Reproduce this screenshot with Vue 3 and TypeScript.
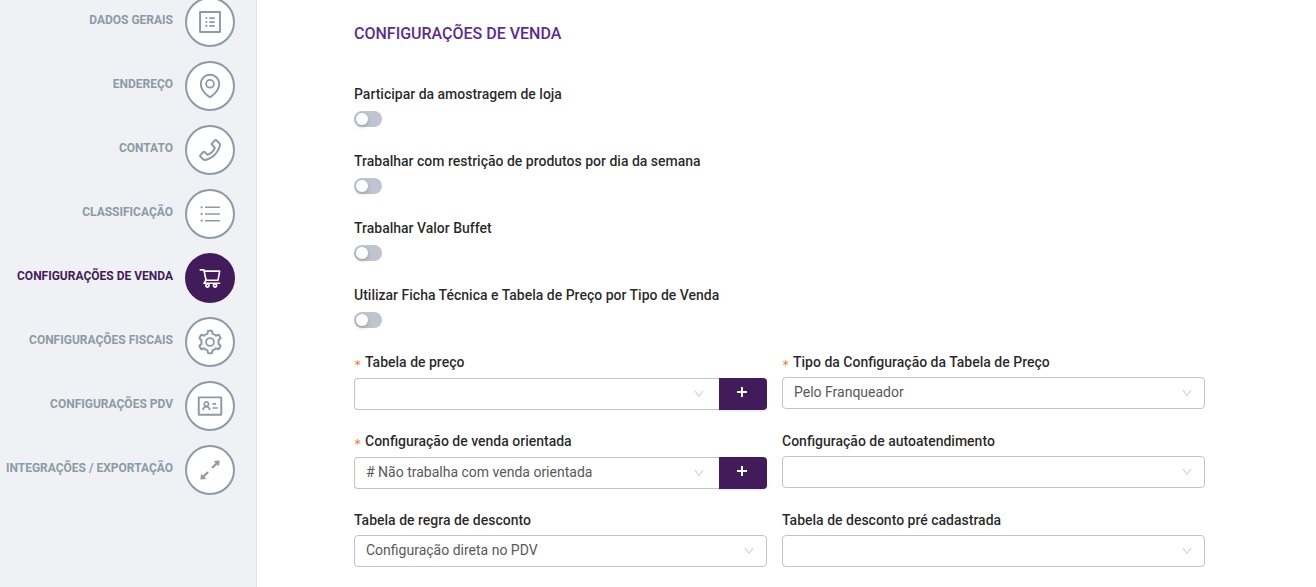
<script setup lang="ts">
import { reactive, ref } from 'vue'

interface Step {
  id: string
  label: string
  icon: string
}

interface Toggle {
  id: string
  label: string
  on: boolean
}

interface Field {
  id: string
  label: string
  required: boolean
  addable: boolean
  value: string
}

// Icon outlines are drawn on a 1024-unit grid.
const steps: Step[] = [
  {
    id: 'dados-gerais',
    label: 'DADOS GERAIS',
    icon: 'M880 112H144c-17.700 0-32 14.300-32 32v736c0 17.700 14.300 32 32 32h736c17.700 0 32-14.300 32-32V144c0-17.700-14.300-32-32-32zm-40 728H184V184h656v656zM484 336h200v64H484zM484 480h200v64H484zM484 624h200v64H484zM340 368a40 40 0 1 0 80 0 40 40 0 1 0-80 0zM340 512a40 40 0 1 0 80 0 40 40 0 1 0-80 0zM340 656a40 40 0 1 0 80 0 40 40 0 1 0-80 0z',
  },
  {
    id: 'endereco',
    label: 'ENDEREÇO',
    icon: 'M854.6 289.1a362.49 362.49 0 0 0-79.9-115.7 370.83 370.83 0 0 0-118.2-77.8C610.7 76.6 562.1 67 512 67c-50.1 0-98.7 9.6-144.5 28.5-44.3 18.3-84 44.500-118.2 77.8A363.6 363.6 0 0 0 169.4 289c-19.5 45-29.4 92.8-29.4 142 0 70.6 16.9 140.9 50.1 208.7 26.7 54.5 64 107.6 111 158.1 80.3 86.2 164.5 138.9 188.4 153a43.9 43.9 0 0 0 22.4 6.1c7.8 0 15.5-2 22.4-6.1 23.9-14.1 108.1-66.8 188.4-153 47-50.4 84.3-103.6 111-158.1C867.1 572 884 501.8 884 431.1c0-49.2-9.9-97-29.4-142zM512 880.2c-65.9-41.900-300-207.8-300-449.1 0-77.9 31.1-151.1 87.6-206.3C356.3 169.5 431.7 139 512 139s155.700 30.5 212.4 85.9C780.9 280 812 353.200 812 431.1c0 241.3-234.1 407.200-300 449.1zM512 255a176 176 0 1 0 0 352 176 176 0 1 0 0-352zm0 66a110 110 0 1 1 0 220 110 110 0 1 1 0-220z',
  },
  {
    id: 'contato',
    label: 'CONTATO',
    icon: 'M877.1 238.7L770.6 132.3c-13-13-30.4-20.3-48.8-20.3s-35.8 7.2-48.8 20.3L558.3 246.8c-13 13-20.3 30.5-20.3 48.9 0 18.5 7.2 35.8 20.3 48.9l89.6 89.7a405.46 405.46 0 0 1-86.4 127.3c-36.7 36.9-79.6 66-127.2 86.6l-89.6-89.7c-13-13-30.4-20.3-48.8-20.3a68.2 68.2 0 0 0-48.8 20.3L132.3 673c-13 13-20.3 30.5-20.3 48.9 0 18.5 7.2 35.8 20.3 48.9l106.4 106.4c22.2 22.2 52.8 34.9 84.2 34.9 6.5 0 12.8-.5 19.2-1.6 132.4-21.8 263.8-92.3 369.9-198.3C818 606 888.4 474.6 910.4 342.1c6.3-37.6-6.3-76.3-33.3-103.4zm-37.6 91.5c-19.5 117.9-82.9 235.5-178.4 331s-213 158.9-330.9 178.4c-14.8 2.5-30-2.5-40.8-13.2L184.9 721.9 295.7 611l119.8 120 .9.9 21.6-8a481.29 481.29 0 0 0 285.7-285.8l8-21.6-120.8-120.7 110.8-110.9 104.5 104.5c10.8 10.8 15.8 26 13.3 40.8z',
  },
  {
    id: 'classificacao',
    label: 'CLASSIFICAÇÃO',
    icon: 'M328 240h544v56H328zM328 484h544v56H328zM328 728h544v56H328zM164 268a42 42 0 1 0 84 0 42 42 0 1 0-84 0zM164 512a42 42 0 1 0 84 0 42 42 0 1 0-84 0zM164 756a42 42 0 1 0 84 0 42 42 0 1 0-84 0z',
  },
  {
    id: 'configuracoes-venda',
    label: 'CONFIGURAÇÕES DE VENDA',
    icon: 'M922.9 701.9H327.4l29.9-60.9 496.8-.9c16.8 0 31.2-12 34.2-28.6l68.8-385.1c1.8-10.1-.9-20.5-7.5-28.4a34.99 34.99 0 0 0-26.6-12.5l-632-2.1-5.4-25.4c-3.4-16.2-18-28-34.6-28H96.5a35.3 35.3 0 1 0 0 70.6h125.9L246 312.8l58.1 281.3-74.8 122.1a34.96 34.96 0 0 0-3 36.8c6 11.9 18.1 19.4 31.5 19.4h62.8a102.43 102.43 0 0 0-20.6 61.7c0 56.6 46 102.6 102.6 102.6s102.6-46 102.6-102.6c0-22.3-7.4-44-20.6-61.7h161.1a102.43 102.43 0 0 0-20.6 61.7c0 56.6 46 102.6 102.6 102.6s102.6-46 102.6-102.6c0-22.3-7.4-44-20.6-61.7H923c19.4 0 35.3-15.8 35.3-35.3a35.42 35.42 0 0 0-35.4-35.2zM305.7 253l575.8 1.9-56.4 315.8-452.3.8L305.7 253zm96.9 612.7c-17.4 0-31.6-14.2-31.6-31.6 0-17.4 14.2-31.6 31.6-31.6s31.6 14.2 31.6 31.6a31.6 31.6 0 0 1-31.6 31.6zm325.1 0c-17.4 0-31.6-14.2-31.6-31.6 0-17.4 14.2-31.6 31.6-31.6s31.6 14.2 31.6 31.6a31.6 31.6 0 0 1-31.6 31.6z',
  },
  {
    id: 'configuracoes-fiscais',
    label: 'CONFIGURAÇÕES FISCAIS',
    icon: 'M924.8 625.7l-65.5-56c3.1-19 4.7-38.4 4.7-57.8s-1.6-38.8-4.7-57.8l65.5-56a32.03 32.03 0 0 0 9.3-35.2l-.9-2.6a443.74 443.74 0 0 0-79.7-137.9l-1.8-2.1a32.12 32.12 0 0 0-35.1-9.5l-81.3 28.9c-30-24.6-63.5-44-99.7-57.6l-15.7-85a32.05 32.05 0 0 0-25.8-25.7l-2.7-.5c-52.1-9.4-106.9-9.4-159 0l-2.7.5a32.05 32.05 0 0 0-25.8 25.7l-15.8 85.4a351.86 351.86 0 0 0-99 57.4l-81.9-29.1a32 32 0 0 0-35.1 9.5l-1.8 2.1a446.02 446.02 0 0 0-79.7 137.9l-.9 2.6c-4.5 12.5-.8 26.5 9.3 35.2l66.3 56.6c-3.1 18.8-4.6 38-4.6 57.1 0 19.2 1.5 38.4 4.6 57.1L99 625.5a32.03 32.03 0 0 0-9.3 35.2l.9 2.6c18.1 50.4 44.9 96.9 79.7 137.9l1.8 2.1a32.12 32.12 0 0 0 35.1 9.5l81.9-29.1c29.8 24.5 63.1 43.9 99 57.4l15.8 85.4a32.05 32.05 0 0 0 25.8 25.7l2.7.5a449.4 449.4 0 0 0 159 0l2.7-.5a32.05 32.05 0 0 0 25.8-25.7l15.7-85a350 350 0 0 0 99.7-57.6l81.3 28.9a32 32 0 0 0 35.1-9.5l1.8-2.1c34.8-41.1 61.6-87.5 79.7-137.9l.9-2.6c4.5-12.3.8-26.3-9.3-35zM788.3 465.9c2.5 15.1 3.8 30.6 3.8 46.1s-1.3 31-3.8 46.1l-6.6 40.1 74.7 63.9a370.03 370.03 0 0 1-42.6 73.6L721 702.8l-31.4 25.8c-23.9 19.6-50.5 35-79.3 45.8l-38.1 14.3-17.9 97a377.5 377.5 0 0 1-85 0l-17.9-97.2-37.8-14.5c-28.5-10.8-55-26.2-78.7-45.7l-31.4-25.9-93.4 33.2c-17-22.9-31.2-47.6-42.6-73.6l75.5-64.5-6.5-40c-2.4-14.9-3.7-30.3-3.7-45.5 0-15.3 1.2-30.6 3.7-45.5l6.5-40-75.5-64.5c11.3-26.1 25.6-50.7 42.6-73.6l93.4 33.2 31.4-25.9c23.7-19.5 50.2-34.9 78.7-45.7l37.9-14.3 17.9-97.2c28.1-3.2 56.8-3.2 85 0l17.9 97 38.1 14.3c28.7 10.8 55.4 26.2 79.3 45.8l31.4 25.8 92.8-32.9c17 22.9 31.2 47.6 42.6 73.6L781.8 426l6.5 39.9zM512 336a176 176 0 1 0 0 352 176 176 0 1 0 0-352zm0 64a112 112 0 1 1 0 224 112 112 0 1 1 0-224z',
  },
  {
    id: 'configuracoes-pdv',
    label: 'CONFIGURAÇÕES PDV',
    icon: 'M928 160H96c-17.700 0-32 14.300-32 32v640c0 17.700 14.300 32 32 32h832c17.700 0 32-14.300 32-32V192c0-17.700-14.300-32-32-32zm-40 632H136V232h752v560zM600 404h132v60H600zM600 556h196v60H600zM380 330a112 112 0 0 0-76 194c-44 28-74 74-80 132h64c6-54 44-92 92-92s86 38 92 92h64c-6-58-36-104-80-132a112 112 0 0 0-76-194zm0 60a52 52 0 1 1 0 104 52 52 0 1 1 0-104z',
  },
  {
    id: 'integracoes',
    label: 'INTEGRAÇÕES / EXPORTAÇÃO',
    icon: 'M855 160.1l-189.2 23.5c-6.6.8-9.3 8.8-4.7 13.5l54.7 54.7-153.5 153.5a8.03 8.03 0 0 0 0 11.3l45.1 45.1c3.1 3.1 8.2 3.1 11.3 0l153.6-153.6 54.7 54.7a7.94 7.94 0 0 0 13.5-4.7L863.9 169a7.9 7.9 0 0 0-8.9-8.9zM416.6 562.3a8.03 8.03 0 0 0-11.3 0L251.8 715.9l-54.7-54.7a7.94 7.94 0 0 0-13.5 4.7L160.1 855c-.6 5.2 3.7 9.5 8.9 8.9l189.2-23.5c6.6-.8 9.3-8.8 4.7-13.5l-54.7-54.7 153.6-153.6c3.1-3.1 3.1-8.2 0-11.3l-45.2-45z',
  },
]

const activeStep = ref('configuracoes-venda')

const toggles = reactive<Toggle[]>([
  { id: 'amostragem', label: 'Participar da amostragem de loja', on: false },
  { id: 'restricao', label: 'Trabalhar com restrição de produtos por dia da semana', on: false },
  { id: 'buffet', label: 'Trabalhar Valor Buffet', on: false },
  { id: 'ficha', label: 'Utilizar Ficha Técnica e Tabela de Preço por Tipo de Venda', on: false },
])

const fields = reactive<Field[]>([
  { id: 'tabela-preco', label: 'Tabela de preço', required: true, addable: true, value: '' },
  { id: 'tipo-config', label: 'Tipo da Configuração da Tabela de Preço', required: true, addable: false, value: 'Pelo Franqueador' },
  { id: 'venda-orientada', label: 'Configuração de venda orientada', required: true, addable: true, value: '# Não trabalha com venda orientada' },
  { id: 'autoatendimento', label: 'Configuração de autoatendimento', required: false, addable: false, value: '' },
  { id: 'regra-desconto', label: 'Tabela de regra de desconto', required: false, addable: false, value: 'Configuração direta no PDV' },
  { id: 'desconto-pre', label: 'Tabela de desconto pré cadastrada', required: false, addable: false, value: '' },
])
</script>

<template>
  <div class="page">
    <nav class="sidebar">
      <a
        v-for="step in steps"
        :key="step.id"
        :href="'#' + step.id"
        class="step"
        :class="{ active: step.id === activeStep }"
        @click.prevent="activeStep = step.id"
      >
        <span class="step-label">{{ step.label }}</span>
        <span class="step-circle">
          <svg class="step-icon" viewBox="0 0 1024 1024" aria-hidden="true">
            <path :d="step.icon" fill-rule="evenodd" />
          </svg>
        </span>
      </a>
    </nav>

    <main class="content">
      <h1 class="title">CONFIGURAÇÕES DE VENDA</h1>

      <form class="form" @submit.prevent>
        <div class="toggles">
          <div v-for="toggle in toggles" :key="toggle.id" class="toggle">
            <label class="label" :for="toggle.id">{{ toggle.label }}</label>
            <input :id="toggle.id" v-model="toggle.on" class="switch" type="checkbox" role="switch" />
          </div>
        </div>

        <div class="fields">
          <div v-for="field in fields" :key="field.id" class="field">
            <label class="label" :for="field.id">
              <span v-if="field.required" class="required">*</span>{{ field.label }}
            </label>
            <div class="control" :class="{ group: field.addable }">
              <div class="select-box">
                <select :id="field.id" v-model="field.value" class="select">
                  <option :value="field.value">{{ field.value }}</option>
                </select>
                <svg class="chevron" viewBox="0 0 1024 1024" aria-hidden="true">
                  <path d="M884 256h-75c-5.1 0-9.9 2.5-12.9 6.6L512 654.2 227.9 262.6c-3-4.1-7.8-6.6-12.9-6.6h-75c-6.5 0-10.3 7.4-6.500 12.7l352.6 486.1c12.8 17.6 39 17.6 51.7 0l352.6-486.1c3.9-5.3.1-12.7-6.4-12.7z" />
                </svg>
              </div>
              <button v-if="field.addable" class="add" type="button" :aria-label="'Adicionar ' + field.label">
                <svg class="plus" viewBox="0 0 12 12" aria-hidden="true">
                  <path d="M5 1h2v4h4v2H7v4H5V7H1V5h4z" />
                </svg>
              </button>
            </div>
          </div>
        </div>
      </form>
    </main>
  </div>
</template>

<style>
body {
  margin: 0;
  background: #fff;
}
</style>

<style scoped>
.page {
  display: flex;
  min-height: 100vh;
  overflow: hidden;
  font-family: Roboto, 'Liberation Sans', sans-serif;
  font-size: 14px;
  line-height: 22px;
}

.sidebar {
  box-sizing: border-box;
  display: flex;
  flex: none;
  flex-direction: column;
  gap: 14px;
  width: 257px;
  margin-top: -3px;
  padding-right: 21px;
  border-right: 1px solid #e4e6ea;
  background: #f0f1f5;
}

.step {
  display: flex;
  align-items: center;
  justify-content: flex-end;
  gap: 12px;
  color: #8c9ba5;
  text-decoration: none;
}

.step-label {
  padding-bottom: 4px;
  font-size: 12px;
  font-weight: 700;
  white-space: nowrap;
}

.step-circle {
  box-sizing: border-box;
  display: flex;
  flex: none;
  align-items: center;
  justify-content: center;
  width: 50px;
  height: 50px;
  border: 2px solid #8c9ba5;
  border-radius: 50%;
  background: #fff;
}

.step-icon {
  width: 28px;
  height: 28px;
  fill: currentColor;
}

.active {
  color: #421c5a;
}

.active .step-circle {
  border-color: #421c5a;
  background: #421c5a;
  color: #fff;
}

.active .step-icon {
  width: 24px;
  height: 24px;
}

.content {
  flex: 1;
  min-width: 0;
  padding: 22px 111px 20px 97px;
}

.title {
  margin: 0;
  color: #5c2d91;
  font-size: 16px;
  font-weight: 500;
  line-height: 24px;
}

.form {
  margin-top: 37px;
}

.toggles {
  display: flex;
  flex-direction: column;
  gap: 23px;
  margin-bottom: 23px;
}

.toggle {
  display: flex;
  flex-direction: column;
  align-items: flex-start;
  gap: 6px;
}

.label {
  display: block;
  color: rgba(0, 0, 0, 0.85);
  font-weight: 500;
}

.switch {
  box-sizing: border-box;
  appearance: none;
  width: 28px;
  height: 16px;
  margin: 0;
  padding: 2px;
  border-radius: 8px;
  background: #bfc4d0;
  cursor: pointer;
}

.switch::before {
  content: '';
  display: block;
  width: 12px;
  height: 12px;
  border-radius: 50%;
  background: #fff;
  box-shadow: 0 2px 4px rgba(0, 35, 11, 0.2);
}

.switch:checked {
  background: #421c5a;
}

.switch:checked::before {
  margin-left: 12px;
}

.fields {
  display: grid;
  grid-template-columns: minmax(0, 413fr) minmax(0, 423fr);
  gap: 20px 15px;
}

.required {
  display: inline-block;
  width: 7px;
  margin-right: 4px;
  color: #f5750f;
  font-family: 'DejaVu Sans Mono', monospace;
  font-size: 12px;
  font-weight: 400;
  line-height: 12px;
  vertical-align: -2px;
}

.control {
  display: flex;
  margin-top: 4px;
}

.group {
  margin-top: 5px;
}

.select-box {
  position: relative;
  flex: 1;
  min-width: 0;
}

.select {
  box-sizing: border-box;
  display: block;
  appearance: none;
  width: 100%;
  height: 32px;
  margin: 0;
  padding: 0 30px 2px 11px;
  border: 1px solid #c4c4c4;
  border-radius: 4px;
  background: #fff;
  color: #595959;
  font: inherit;
}

.group .select {
  border-right: 0;
  border-radius: 4px 0 0 4px;
}

.chevron {
  position: absolute;
  top: 10px;
  right: 12px;
  width: 12px;
  height: 12px;
  fill: #c8cbd6;
  pointer-events: none;
}

.group .chevron {
  right: 14px;
}

.add {
  display: flex;
  flex: none;
  align-items: center;
  justify-content: center;
  width: 48px;
  height: 32px;
  padding: 0 2px 4px 0;
  border: 0;
  border-radius: 0 4px 4px 0;
  background: #421c5a;
  box-shadow: 0 2px 0 rgba(0, 0, 0, 0.05);
  cursor: pointer;
}

.plus {
  width: 12px;
  height: 12px;
  fill: #fff;
}
</style>
